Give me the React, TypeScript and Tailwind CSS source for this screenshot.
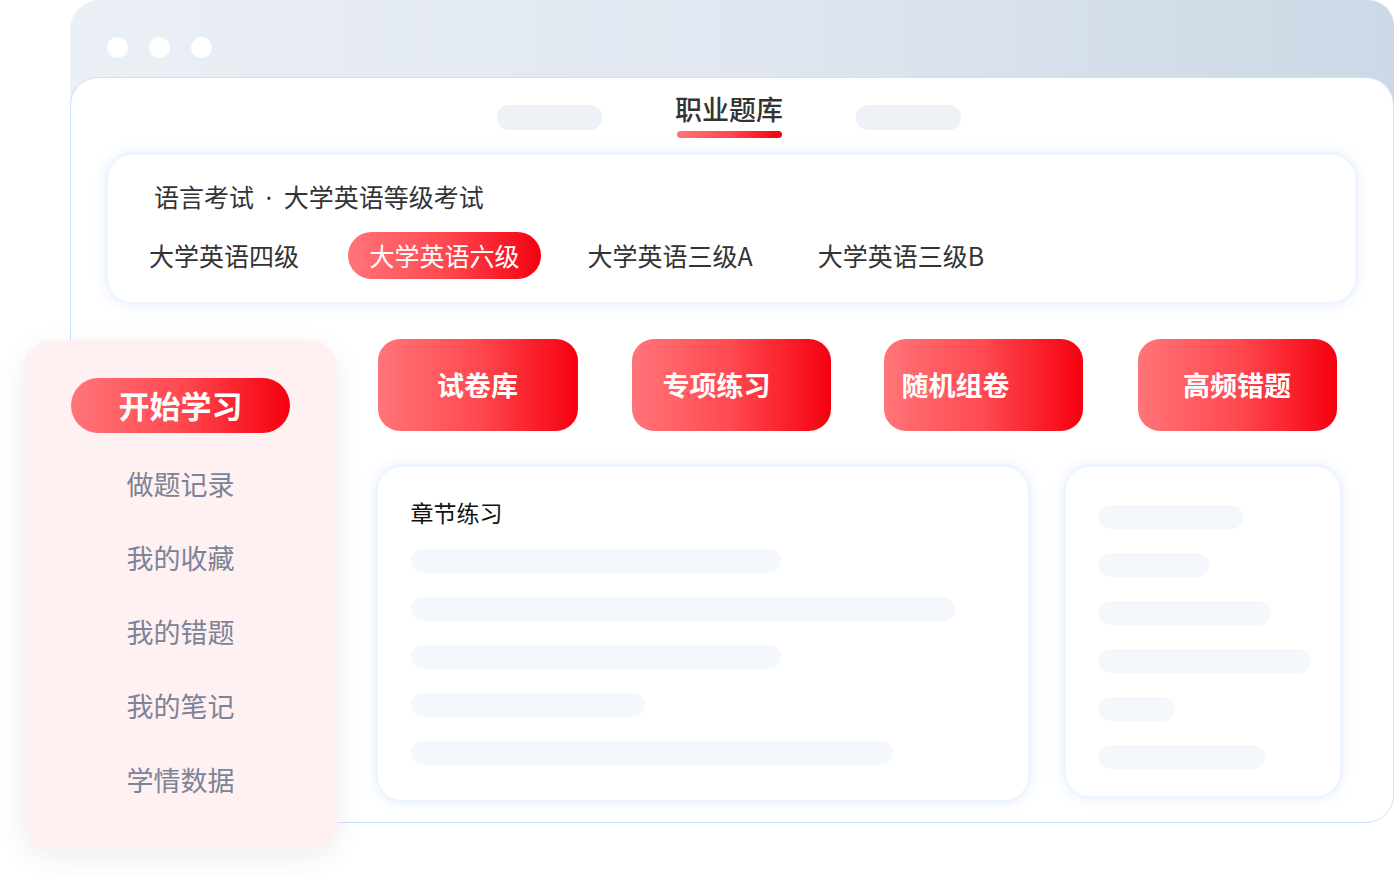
import React from "react";

const GRAD = "bg-[linear-gradient(90deg,#ff7579_0%,#ff4950_50%,#f5000f_100%)]";

function Bar({ w }: { w: number }) {
  return <div className="h-[24px] rounded-full bg-[#f4f7fb]" style={{ width: w }} />;
}

export default function App() {
  const chapterBars = [370, 544, 370, 234, 482];
  const sideBars = [144, 110, 172, 212, 76, 166];
  const menu = ["做题记录", "我的收藏", "我的错题", "我的笔记", "学情数据"];
  return (
    <div className="relative w-[1396px] h-[876px] bg-white overflow-hidden font-['Noto_Sans_CJK_SC','Noto_Sans',sans-serif]">
      <div className="pl-[70px]">
        <div className="w-[1324px]">
          {/* browser header */}
          <div className="h-[105px] rounded-tl-[30px] rounded-tr-[26px] bg-[linear-gradient(90deg,#ebeff6_0%,#e0e7f0_50%,#ccd8e6_100%)] flex items-start gap-[21px] pl-[37px] pt-[37px]">
            <div className="w-[21px] h-[21px] rounded-full bg-white" />
            <div className="w-[21px] h-[21px] rounded-full bg-white" />
            <div className="w-[21px] h-[21px] rounded-full bg-white" />
          </div>
          {/* white panel */}
          <div className="-mt-[28px] relative h-[746px] bg-white rounded-[28px] border-[1.5px] border-[#cce1fb]">
            {/* tabs */}
            <div className="pt-[13px] pr-[6px] flex justify-center items-start gap-[73px]">
              <div className="w-[105px] h-[25px] mt-[14px] rounded-[12px] bg-[#eef1f6]" />
              <div className="flex flex-col items-center">
                <div className="text-[27px] leading-[36px] font-medium text-[#333333]">职业题库</div>
                <div className={`w-[105px] h-[7px] mt-[4px] rounded-full ${GRAD}`} />
              </div>
              <div className="w-[105px] h-[25px] mt-[14px] rounded-[12px] bg-[#eef1f6]" />
            </div>
            {/* category card */}
            <div className="ml-[37px] mr-[38px] mt-[17px] h-[147px] rounded-[24px] bg-white shadow-[0_0_0_3px_#eef5fe,0_0_12px_4px_rgba(210,228,252,0.45)] pt-[25px]">
              <div className="pl-[46px] text-[25px] leading-[32px] text-[#333333]">
                语言考试<span className="px-[5px] font-['Noto_Sans',sans-serif]"> · </span>大学英语等级考试
              </div>
              <div className="mt-[19px] pl-[20px] flex items-center text-[25px] text-[#333333]">
                <div className="w-[192px] h-[47px] flex items-center justify-center">大学英语四级</div>
                <div className={`ml-[28px] w-[193px] h-[47px] rounded-full flex items-center justify-center text-white ${GRAD}`}>大学英语六级</div>
                <div className="ml-[24px] w-[210px] h-[47px] flex items-center justify-center">大学英语三级A</div>
                <div className="ml-[22px] w-[208px] h-[47px] flex items-center justify-center">大学英语三级B</div>
              </div>
            </div>
            {/* main area */}
            <div className="pl-[306.5px]">
              <div className="mt-[37px] flex items-start text-white text-[27px] font-bold">
                <div className={`w-[200px] h-[92px] rounded-[22px] flex items-center justify-center ${GRAD}`}>试卷库</div>
                <div className={`ml-[54px] w-[199px] h-[92px] rounded-[22px] flex items-center pl-[31px] ${GRAD}`}>专项练习</div>
                <div className={`ml-[53px] w-[199px] h-[92px] rounded-[22px] flex items-center pl-[18px] ${GRAD}`}>随机组卷</div>
                <div className={`ml-[55px] w-[199px] h-[92px] rounded-[22px] flex items-center justify-center ${GRAD}`}>高频错题</div>
              </div>
              <div className="mt-[36px] flex items-start">
                <div className="w-[650px] h-[333px] rounded-[24px] bg-white shadow-[0_0_0_3px_#eef5fe,0_0_12px_4px_rgba(210,228,252,0.45)] pl-[33px] pt-[30px]">
                  <div className="text-[23px] leading-[30px] text-[#111111]">章节练习</div>
                  <div className="mt-[22px] flex flex-col gap-[24px]">
                    {chapterBars.map((w, i) => (
                      <Bar key={i} w={w} />
                    ))}
                  </div>
                </div>
                <div className="ml-[38px] w-[274px] h-[329px] rounded-[24px] bg-white shadow-[0_0_0_3px_#eef5fe,0_0_12px_4px_rgba(210,228,252,0.45)] pl-[33px] pt-[38px]">
                  <div className="flex flex-col gap-[24px]">
                    {sideBars.map((w, i) => (
                      <Bar key={i} w={w} />
                    ))}
                  </div>
                </div>
              </div>
            </div>
          </div>
        </div>
      </div>
      {/* floating sidebar */}
      <div className="absolute left-[23px] top-[340px] w-[315px] h-[510px] rounded-[30px] bg-[#fff0f1] shadow-[0_8px_30px_rgba(0,0,0,0.07)] flex flex-col items-center pt-[38px]">
        <div className={`w-[219px] h-[55px] rounded-full flex items-center justify-center text-white text-[31px] font-bold ${GRAD}`}>开始学习</div>
        <div className="mt-[14px] flex flex-col items-center">
          {menu.map((m) => (
            <div key={m} className="text-[27px] leading-[74px] text-[#7b8498]">{m}</div>
          ))}
        </div>
      </div>
    </div>
  );
}
